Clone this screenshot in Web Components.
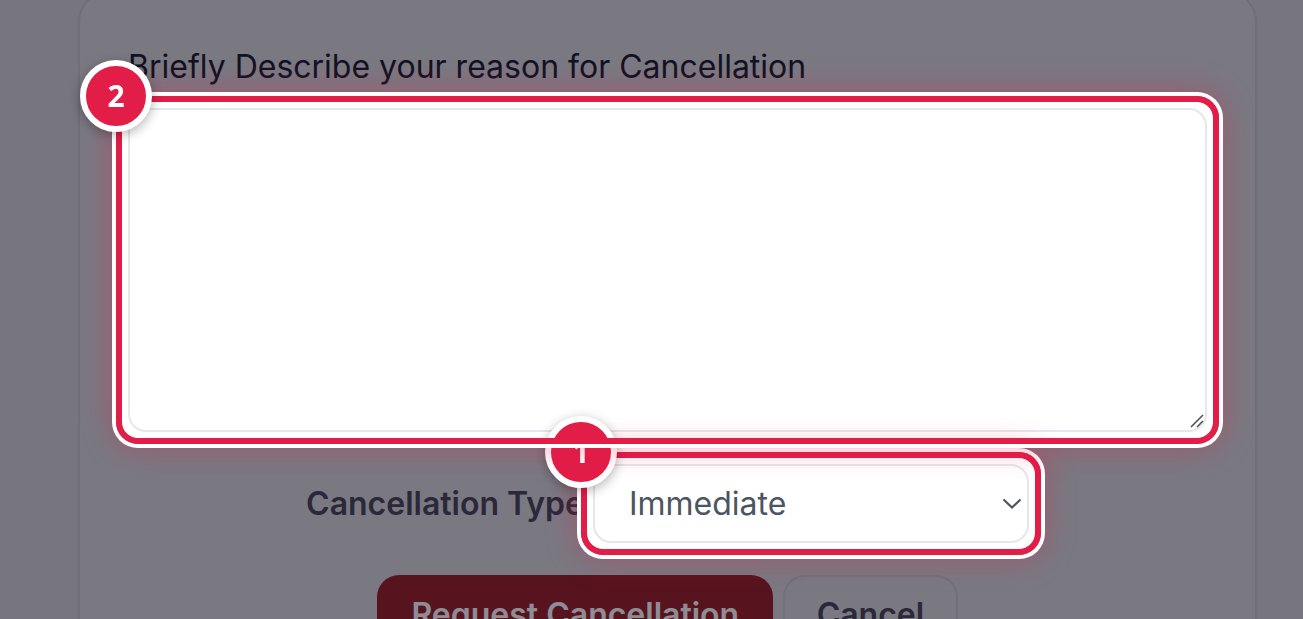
<!DOCTYPE html>
<html lang="en">
    <head>
        <meta charset="UTF-8"/>
        <title>Request cancellation</title>
        <style>
            html, body { margin: 0; height: 100%; overflow: hidden; background: #d5d5d9; }
        </style>
    </head>
    <body>
        <!-- grey backdrop the tour draws over the page -->
        <template id="tour-dim-temp">
            <style>
                :host { display: block; position: fixed; inset: 0; z-index: 10; background: rgba(4, 2, 20, .45); }
            </style>
        </template>

        <!-- wraps one control: white cut out, red ring and the numbered badge -->
        <template id="tour-spot-temp">
            <style>
                :host { display: block; position: relative; }
                :host([narrow]) { display: inline-block; }
                .cut { position: absolute; inset: -6px; background: #fff; border-radius: 14px; z-index: 11; }
                ::slotted(*) { position: relative; z-index: 12; }
                .ring {
                    position: absolute; inset: -12px; border: 6px solid #e11d48; border-radius: 22px;
                    box-shadow: 0 0 0 4px #fff, 0 0 30px 4px rgba(225, 29, 72, .36);
                    z-index: var(--layer);
                    pointer-events: none;
                }
                .badge {
                    position: absolute; left: -48px; top: -48px; width: 60px; height: 60px;
                    border: 6px solid #fff; border-radius: 50%; background: #e11d48; color: #fff;
                    display: flex; align-items: center; justify-content: center;
                    font: 700 30px/1 "Open Sans", sans-serif;
                    box-shadow: 0 3px 12px rgba(0, 0, 0, .3);
                    z-index: var(--layer);
                }
            </style>
            <div class="cut"></div>
            <slot></slot>
            <div class="ring"></div>
            <div class="badge"></div>
        </template>

        <template id="text-box-temp">
            <style>
                :host { display: block; height: 324px; }
                textarea {
                    display: block; box-sizing: border-box; width: 100%; height: 100%; margin: 0; padding: 16px;
                    border: 2px solid #e5e7eb; border-radius: 18px; background: #fff; outline: none; resize: none;
                    font: 400 32px Inter, sans-serif; color: #4b5563;
                }
                svg { position: absolute; right: 3px; bottom: 4px; width: 14px; height: 14px; }
            </style>
            <textarea></textarea>
            <svg viewBox="0 0 14 14" fill="none" stroke="#555" stroke-width="1.6"><path d="M1 13L13 1M7 13l6-6"/></svg>
        </template>

        <template id="select-box-temp">
            <style>
                :host { display: block; width: 436px; height: 79px; }
                select {
                    appearance: none; display: block; width: 100%; height: 100%; box-sizing: border-box;
                    border: 2px solid #e5e7eb; border-radius: 18px; background: #fff; color: #4b5563;
                    font: 400 32px Inter, sans-serif; padding: 0 60px 0 34px; outline: none;
                }
                svg { position: absolute; right: 7px; top: 33px; width: 20px; height: 14px; }
            </style>
            <select><option>Immediate</option><option>End of term</option></select>
            <svg viewBox="0 0 20 14" fill="none" stroke="#4b5563" stroke-width="2.2"><path d="M1.500 2.500l8.500 8 8.500-8"/></svg>
        </template>

        <template id="app-button-temp">
            <style>
                :host { display: block; }
                button {
                    display: block; box-sizing: border-box; height: 80px; padding: 0 34px; border-radius: 22px;
                    font: 600 32px/40px Inter, sans-serif; cursor: pointer;
                    border: 0; background: #9c2428; color: #fff;
                }
                :host([plain]) button { border: 2px solid #c8cacf; background: transparent; color: #4a4858; padding: 0 31.5px; }
            </style>
            <button><slot></slot></button>
        </template>

        <template id="cancel-card-temp">
            <style>
                :host {
                    display: block; box-sizing: border-box; width: 1179px; margin: -10px 0 0 78px; padding: 55px 48px 48px;
                    background: #dadadd; border: 2px solid #c6c8cd; border-radius: 32px;
                    font-family: Inter, sans-serif;
                }
                label.top { display: block; font-size: 32px; line-height: 40px; color: #201f2e; margin-bottom: 21px; }
                .type { display: flex; justify-content: center; align-items: center; gap: 9px; margin-top: 32px; }
                .type label { font-size: 32px; line-height: 40px; font-weight: 600; color: #4a4858; }
                .actions { display: flex; justify-content: center; gap: 10px; margin-top: 32px; }
            </style>
            <label class="top">Briefly Describe your reason for Cancellation</label>
            <tour-spot num="2" layer="30"><text-box></text-box></tour-spot>
            <div class="type">
                <label>Cancellation Type</label>
                <tour-spot num="1" layer="20" narrow><select-box></select-box></tour-spot>
            </div>
            <div class="actions">
                <app-button>Request Cancellation</app-button>
                <app-button plain>Cancel</app-button>
            </div>
        </template>

        <cancel-card></cancel-card>
        <tour-dim></tour-dim>

        <script>
            // every element just clones its template into an open shadow root
            function shadowFrom(el, id) {
                const root = el.attachShadow({mode: "open"});
                root.appendChild(document.getElementById(id).content.cloneNode(true));
                return root;
            }

            customElements.define("tour-dim", class extends HTMLElement {
                constructor() { super(); shadowFrom(this, "tour-dim-temp"); }
            });
            customElements.define("tour-spot", class extends HTMLElement {
                constructor() { super(); this.root = shadowFrom(this, "tour-spot-temp"); }
                connectedCallback() {
                    this.root.querySelector(".badge").textContent = this.getAttribute("num");
                    this.style.setProperty("--layer", this.getAttribute("layer"));
                }
            });
            customElements.define("text-box", class extends HTMLElement {
                constructor() { super(); shadowFrom(this, "text-box-temp"); }
            });
            customElements.define("select-box", class extends HTMLElement {
                constructor() { super(); shadowFrom(this, "select-box-temp"); }
            });
            customElements.define("app-button", class extends HTMLElement {
                constructor() { super(); shadowFrom(this, "app-button-temp"); }
            });
            customElements.define("cancel-card", class extends HTMLElement {
                constructor() { super(); shadowFrom(this, "cancel-card-temp"); }
            });
        </script>
    </body>
</html>
